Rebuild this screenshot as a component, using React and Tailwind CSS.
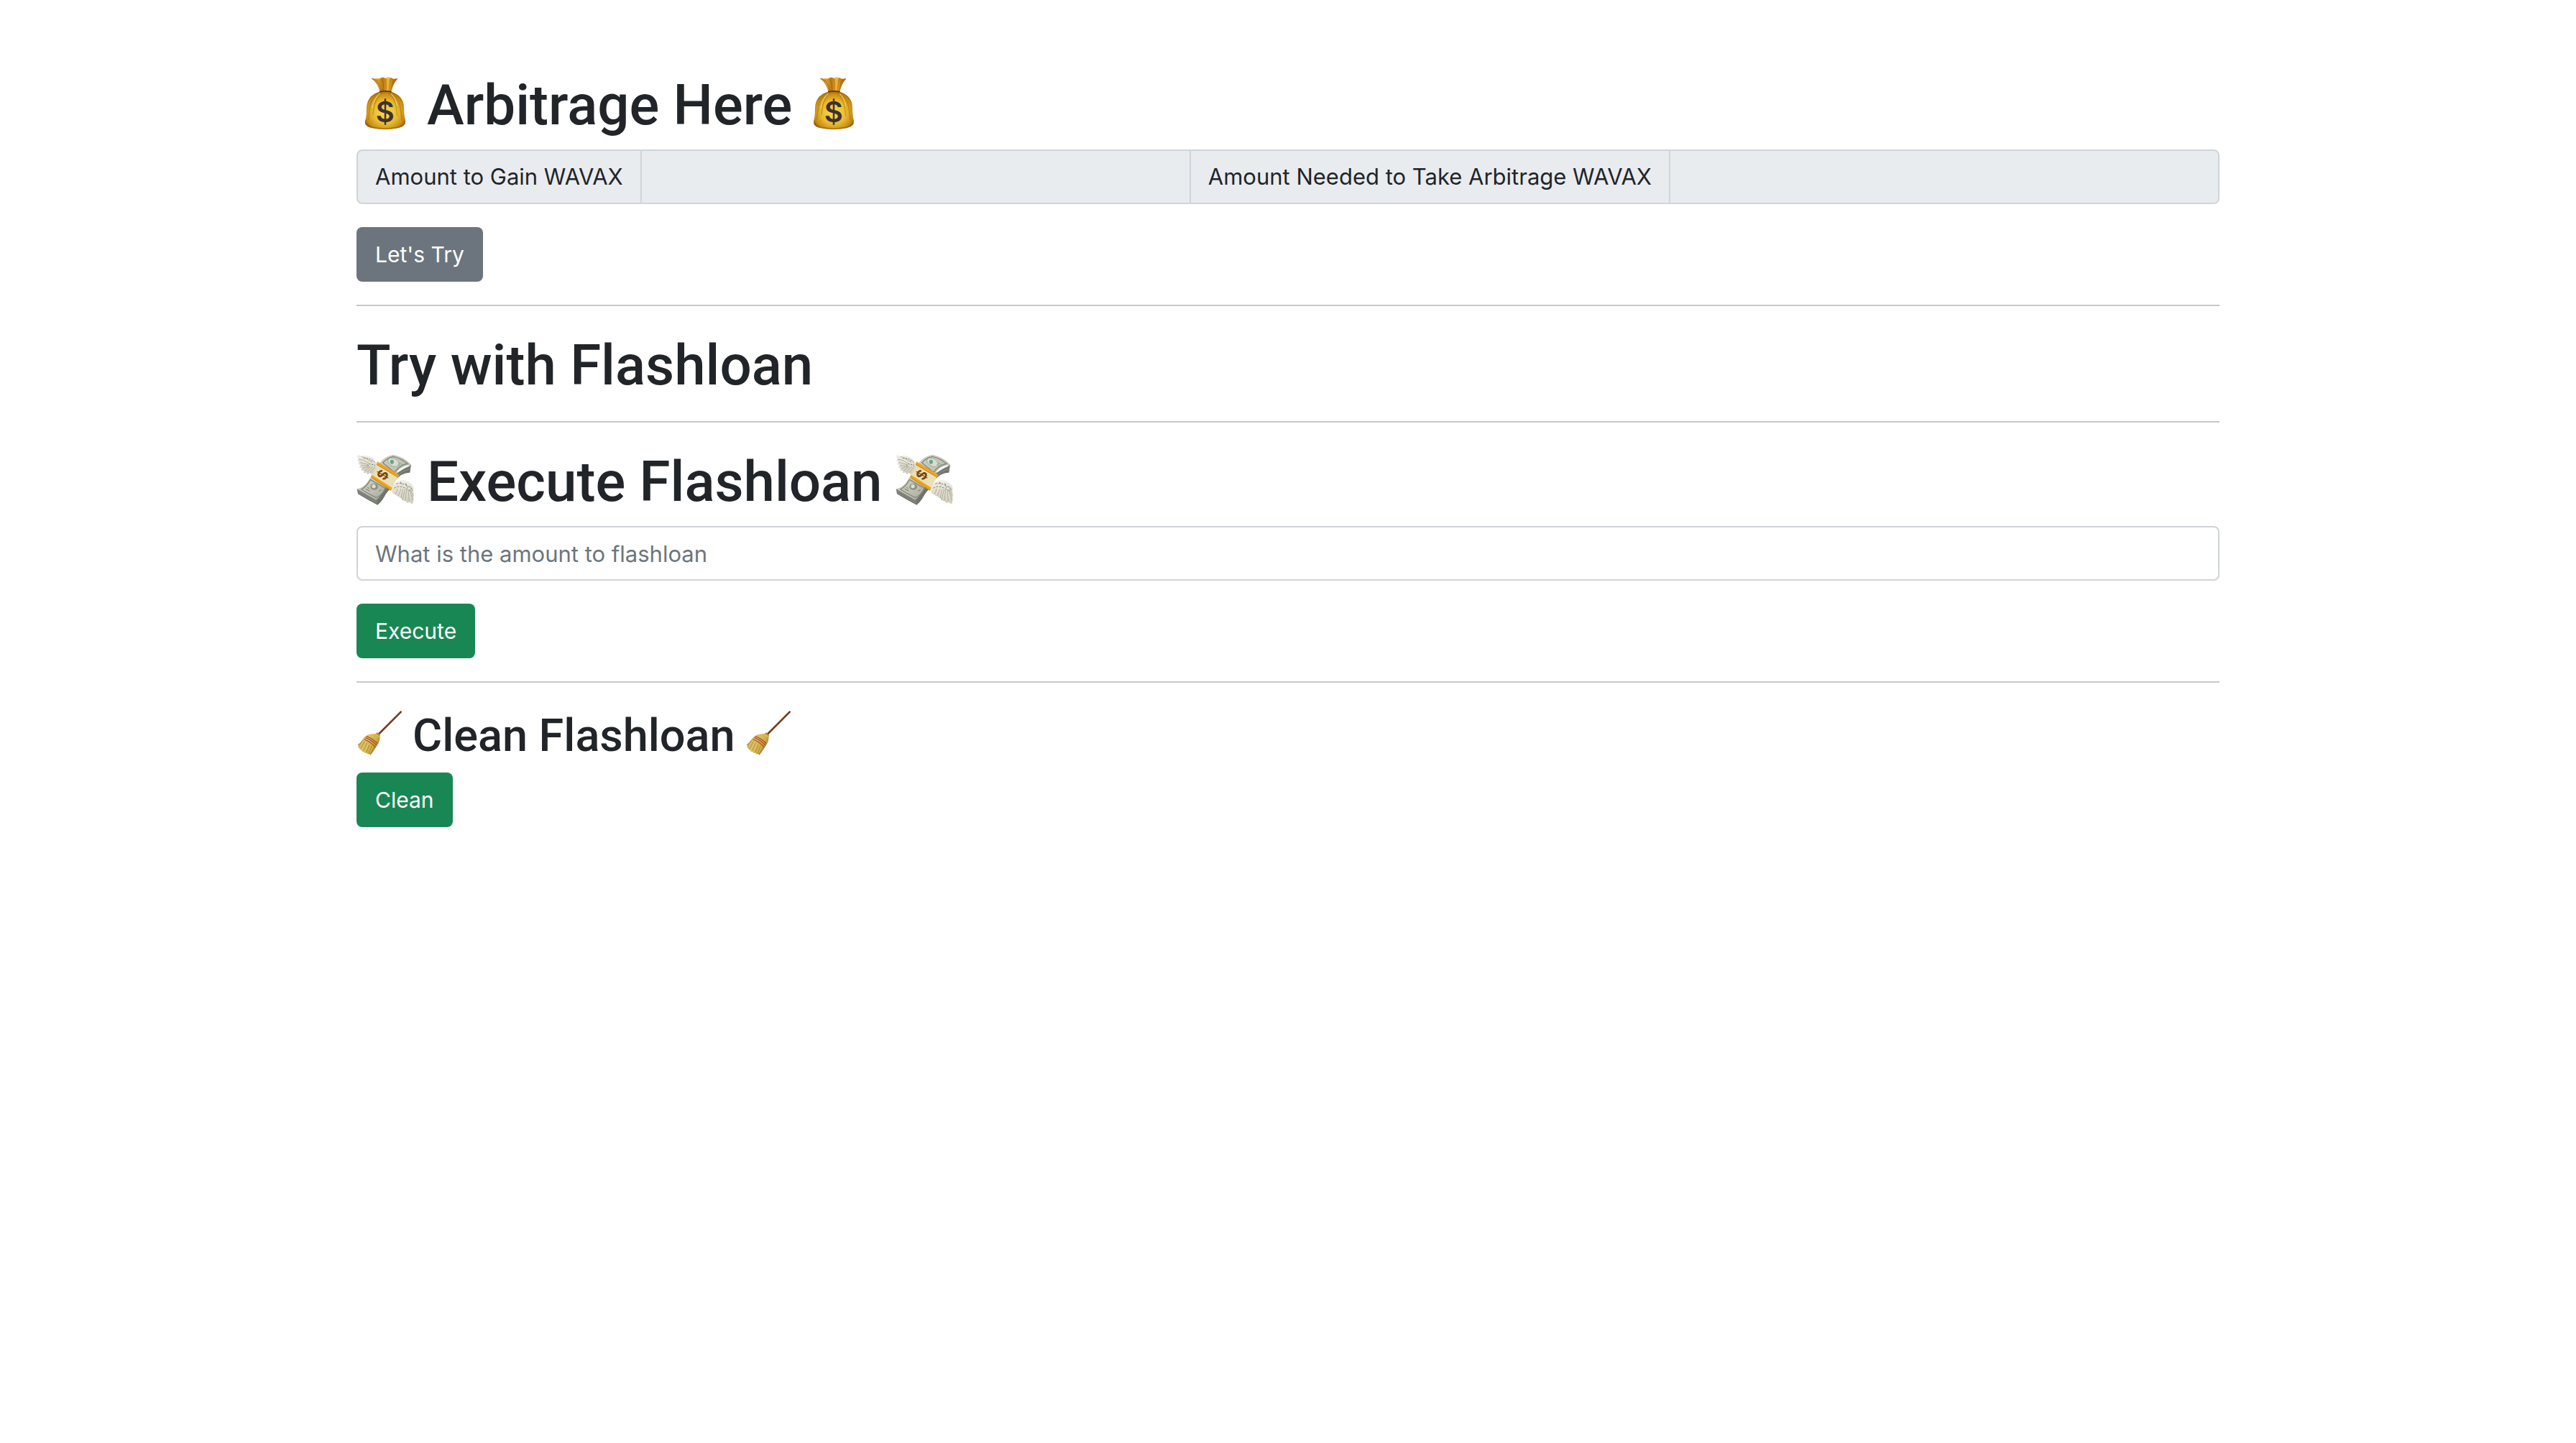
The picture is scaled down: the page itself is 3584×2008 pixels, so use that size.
function MoneyBag() {
  return (
    <svg className="size-20 shrink-0" viewBox="18 28 240 240" role="img" aria-label="money bag">
      <defs>
        <radialGradient id="bagBody" cx="0.5" cy="0.55" r="0.6">
          <stop offset="0" stopColor="#f8dc4c" />
          <stop offset="0.5" stopColor="#e9bd31" />
          <stop offset="0.8" stopColor="#c88c17" />
          <stop offset="1" stopColor="#8a5306" />
        </radialGradient>
        <linearGradient id="bagNeck" x1="0" y1="0" x2="1" y2="0">
          <stop offset="0" stopColor="#a8680e" />
          <stop offset="0.25" stopColor="#d79a2c" />
          <stop offset="0.45" stopColor="#b97513" />
          <stop offset="0.62" stopColor="#efb63c" />
          <stop offset="0.8" stopColor="#bf7a14" />
          <stop offset="1" stopColor="#9c5e0b" />
        </linearGradient>
      </defs>
      <path d="M80 44Q88 41 98 44Q108 41 116 43Q124 38 134 40L139 44L143 39Q156 37 162 40L172 45Q184 45 191 43Q177 58 172 72Q166 86 163 99H115Q112 84 104 70Q96 54 80 44Z" fill="url(#bagNeck)" />
      <path d="M100 47Q116 68 122 96M122 44Q132 66 132 96M139 45Q143 70 141 96M162 42Q156 66 153 96M176 47Q164 70 161 95" fill="none" stroke="#8e560c" strokeWidth="2.5" opacity="0.55" />
      <path d="M88 44Q106 48 116 44M143 42Q150 46 160 42" fill="none" stroke="#f6cf78" strokeWidth="3" opacity="0.8" />
      <path d="M114 99Q138 95 163 99Q186 106 200 121Q216 139 216 166Q216 188 219 207Q224 222 221 232Q213 246 190 251Q164 257 138 257Q108 257 84 251Q61 246 55 234Q52 224 57 210Q60 192 60 168Q60 140 78 119Q91 106 114 99Z" fill="url(#bagBody)" />
      <path d="M112 103Q88 118 78 146Q70 176 68 218M122 103Q102 122 94 150Q88 174 87 196M160 103Q184 118 194 142Q205 172 207 218M152 103Q172 118 180 146Q186 174 188 200" fill="none" stroke="#a66b0c" strokeWidth="4" opacity="0.5" />
      <path d="M116 106Q90 128 83 168M162 107Q182 126 188 158" fill="none" stroke="#ffe569" strokeWidth="4" opacity="0.65" />
      <path d="M58 230Q66 245 92 249Q138 257 184 249Q212 244 219 230" fill="none" stroke="#8a5306" strokeWidth="5" opacity="0.5" />
      <path d="M114 99Q138 94 164 99" fill="none" stroke="#643a05" strokeWidth="5" />
      <text x="137" y="225" textAnchor="middle" fontSize="120" fontWeight="600" fill="#3f3033" fontFamily="Inter, sans-serif">$</text>
    </svg>
  );
}

function FlyingMoney() {
  return (
    <svg className="size-20 shrink-0" viewBox="18 24 240 240" role="img" aria-label="money with wings">
      <defs>
        <linearGradient id="billPaper" x1="0" y1="0" x2="1" y2="1">
          <stop offset="0" stopColor="#d9d9cb" />
          <stop offset="0.5" stopColor="#c3c4b6" />
          <stop offset="1" stopColor="#8d9087" />
        </linearGradient>
        <linearGradient id="billWing" x1="0" y1="0" x2="0" y2="1">
          <stop offset="0" stopColor="#f1efe4" />
          <stop offset="1" stopColor="#cfccba" />
        </linearGradient>
      </defs>
      {/* stacked edge of the notes */}
      <path d="M20 181L24 202Q60 224 106 248Q122 236 134 214Q150 184 164 180L178 148Q206 112 241 113L246 80L160 130L100 226Z" fill="#6f736b" />
      <path d="M22 188Q60 208 104 232M23 195Q60 216 105 240M244 88Q208 92 184 124M243 98Q208 102 180 138" fill="none" stroke="#a6a99f" strokeWidth="2" />
      {/* top note */}
      <path d="M117 70Q136 44 172 38Q214 46 246 80Q212 82 192 104L160 148Q140 172 128 192Q114 218 102 226Q60 204 20 181Q44 176 60 158L80 128Z" fill="url(#billPaper)" />
      <path d="M128 72Q146 50 172 46Q206 54 230 76Q202 82 186 100L176 112ZM76 142L140 180Q120 210 101 218Q66 200 38 183Q58 174 76 142Z" fill="none" stroke="#83877d" strokeWidth="4" />
      <ellipse cx="172" cy="70" rx="25" ry="16" fill="#dbdccf" stroke="#969a8d" strokeWidth="2" transform="rotate(28 172 70)" />
      <ellipse cx="166" cy="68" rx="8" ry="9" fill="#65a68b" />
      <path d="M194 72L211 80M190 79L203 86M146 62L153 57" stroke="#75b092" strokeWidth="3" />
      <ellipse cx="92" cy="172" rx="16" ry="13" fill="#8c9083" />
      <ellipse cx="90" cy="170" rx="8" ry="8" fill="#dedfd2" />
      <path d="M56 181L74 190M64 175L71 179M112 190L122 184" stroke="#6d7368" strokeWidth="3" />
      {/* paper band */}
      <path d="M105 70L194 126Q178 150 164 186L78 132Q88 110 105 70Z" fill="#eadfb5" />
      <path d="M105 67L196 122L190 133L101 80ZM82 122L167 176L162 189L77 133Z" fill="#eda51c" />
      <path d="M103 79L190 132M81 133L162 187" stroke="#b97508" strokeWidth="2" />
      <text x="0" y="21" textAnchor="middle" fontSize="58" fontWeight="700" fill="#78450c" fontFamily="Inter, sans-serif" transform="translate(127 122) rotate(-60)">$</text>
      {/* left wing */}
      <path d="M20 42Q30 37 38 45Q50 38 62 43Q86 48 96 65Q105 76 102 92L95 106Q88 112 83 120Q77 121 75 113Q68 121 63 120Q60 118 62 111Q52 116 48 113Q47 110 51 105Q40 106 36 102Q37 98 42 95Q31 94 29 89Q31 85 37 83Q26 79 25 74L31 70Q22 65 21 59L27 57Q19 49 20 42Z" fill="url(#billWing)" />
      <path d="M38 46Q58 50 76 66M27 57Q48 58 70 74M31 70L68 80M37 83L67 86M42 95L71 88M51 105L78 88M62 111L86 88M75 113L96 88" fill="none" stroke="#b1ae9c" strokeWidth="3" />
      <path d="M48 53Q76 52 94 70M70 76L96 82M78 64L84 72M64 80L71 88" fill="none" stroke="#7c7a6e" strokeWidth="3" strokeDasharray="7 4" />
      {/* right wing */}
      <path d="M166 194Q166 176 178 158Q194 143 214 144Q238 148 252 166Q260 178 254 190Q260 204 255 213Q259 224 254 231Q256 242 250 243Q244 243 238 234Q236 241 231 239Q225 237 222 230Q216 234 210 227Q205 225 204 219Q197 221 192 211Q185 214 181 204Q171 205 166 194Z" fill="url(#billWing)" />
      <path d="M181 204L190 180M192 211L204 180M204 219L212 182M210 227L221 182M222 230L227 184M238 234L234 184M254 231L240 184M255 213L244 182M254 190L240 168" fill="none" stroke="#b1ae9c" strokeWidth="3" />
      <path d="M184 160Q210 150 250 182M176 178Q200 160 242 190M202 152L208 166M224 158L230 176" fill="none" stroke="#7c7a6e" strokeWidth="3" strokeDasharray="8 5" />
    </svg>
  );
}

function Broom() {
  return (
    <svg className="size-16 shrink-0" viewBox="18 40 192 192" role="img" aria-label="broom">
      <defs>
        <linearGradient id="broomStraw" x1="0" y1="0" x2="1" y2="0.6">
          <stop offset="0" stopColor="#b08b33" />
          <stop offset="0.45" stopColor="#dfc162" />
          <stop offset="0.75" stopColor="#cfae4b" />
          <stop offset="1" stopColor="#9d7823" />
        </linearGradient>
      </defs>
      <path d="M112 136L203 45" stroke="#6b3517" strokeWidth="8" strokeLinecap="round" />
      <path d="M113 132L201 44" stroke="#ab6a40" strokeWidth="2" strokeLinecap="round" />
      <path d="M99 136L105 131L116 141L116 148Q116 168 105 184Q92 206 77 225L70 220L66 222L59 216L54 217L48 211L42 211L38 204L31 203L31 196L24 194L27 187L22 181Q36 174 48 154Q64 134 99 136Z" fill="url(#broomStraw)" />
      <path d="M44 162L28 186M52 168L36 198M62 174L48 205M72 182L60 212M83 186L70 218M92 190L77 220" stroke="#92702a" strokeWidth="2.5" opacity="0.7" />
      <path d="M48 165L34 191M67 178L54 207M87 190L74 215" stroke="#efd883" strokeWidth="2" opacity="0.8" />
      <path d="M60 147Q82 155 106 177M56 153Q78 161 102 184M51 160Q74 168 97 192" fill="none" stroke="#a9482a" strokeWidth="3.5" />
      <path d="M98 137L105 131L117 142L113 149Z" fill="#b8902f" />
      <path d="M101 139L113 148" stroke="#efd778" strokeWidth="3" />
    </svg>
  );
}

function Divider() {
  return <hr className="my-8 border-0 border-t-2 border-[#c8c8c9]" />;
}

function Button({ color, children }) {
  return (
    <button type="button" className={`block h-19 rounded-lg px-[26px] text-[30px] leading-12 text-white ${color}`}>
      {children}
    </button>
  );
}

function Heading({ as: Tag = "h1", icon, className, children }) {
  return (
    <Tag className={`flex items-center font-medium whitespace-nowrap [font-family:Roboto,Inter,sans-serif] ${className}`}>
      {icon}
      <span className="pt-1.5">{children}</span>
      {icon}
    </Tag>
  );
}

const addon = "flex items-center px-6 whitespace-nowrap";
const readout = "min-w-0 flex-1 border-[#ced4da] bg-[#e9ecef] px-6 outline-none";

export default function App() {
  return (
    <main className="mx-auto max-w-[2640px] px-6 pt-24 text-[31px] leading-12 text-[#212529] [font-family:Inter,'Liberation_Sans',sans-serif]">
      <section>
        <Heading icon={<MoneyBag />} className="mb-4 h-24 gap-[18px] text-[78px]">Arbitrage Here</Heading>
        <div className="mb-8 flex h-19 overflow-hidden rounded-lg border-2 border-[#ced4da] bg-[#e9ecef]">
          <label htmlFor="gain" className={addon}>Amount to Gain WAVAX</label>
          <input id="gain" type="text" readOnly className={`border-x-2 ${readout}`} />
          <label htmlFor="needed" className={addon}>Amount Needed to Take Arbitrage WAVAX</label>
          <input id="needed" type="text" readOnly className={`border-l-2 ${readout}`} />
        </div>
        <Button color="bg-[#6c757d]">Let's Try</Button>
      </section>
      <Divider />
      <Heading className="h-24 text-[78px]">Try with Flashloan</Heading>
      <Divider />
      <section>
        <Heading icon={<FlyingMoney />} className="mb-4 h-24 gap-[18px] text-[78px]">Execute Flashloan</Heading>
        <input
          type="text"
          aria-label="Amount to flashloan"
          placeholder="What is the amount to flashloan"
          className="mb-8 block h-19 w-full rounded-lg border-2 border-[#ced4da] bg-white px-6 outline-none placeholder:text-[#6c757d]"
        />
        <Button color="bg-[#198754]">Execute</Button>
      </section>
      <Divider />
      <section>
        <Heading as="h2" icon={<Broom />} className="mb-4 h-[77px] gap-[14px] text-[63px]">Clean Flashloan</Heading>
        <Button color="bg-[#198754]">Clean</Button>
      </section>
    </main>
  );
}
